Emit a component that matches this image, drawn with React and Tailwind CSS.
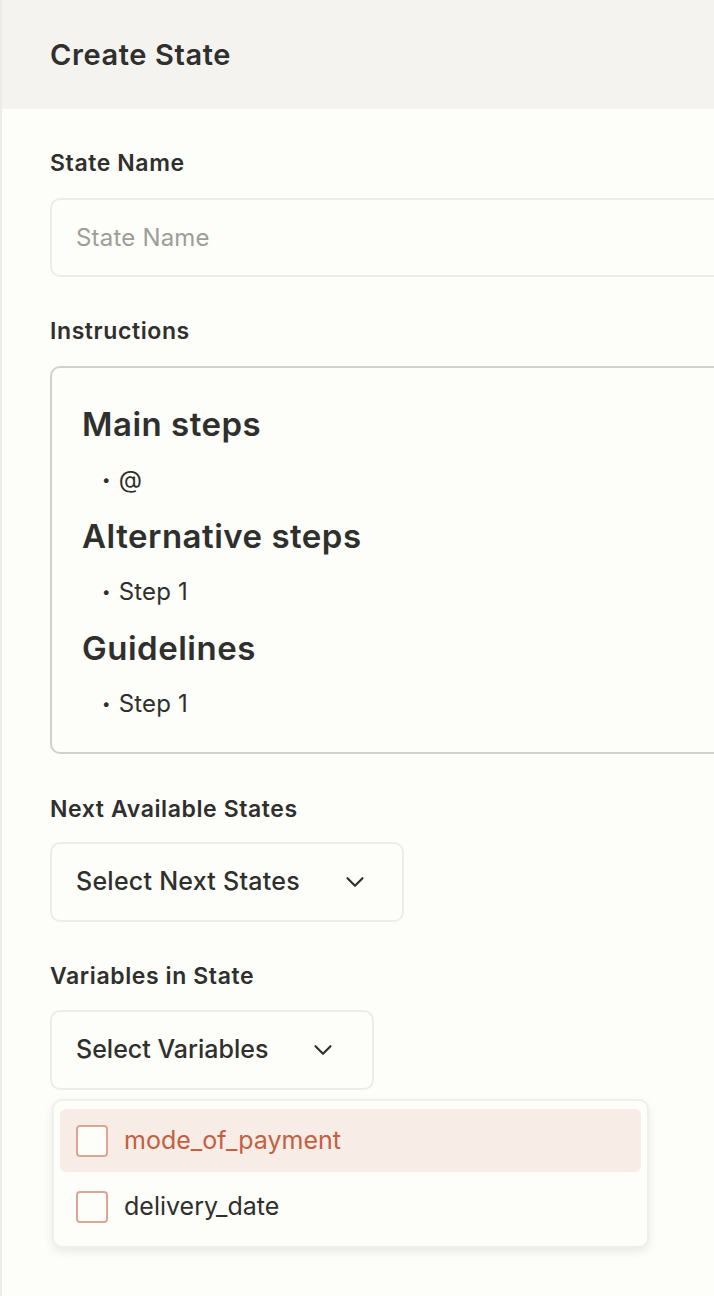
import React from "react";

const font = { fontFamily: "Inter, 'Noto Sans', sans-serif" };

function Chevron() {
  return (
    <svg width="30" height="30" viewBox="0 0 24 24" fill="none" stroke="#2f2f2d" strokeWidth="1.7" strokeLinecap="round" strokeLinejoin="round">
      <path d="M6 9l6 6 6-6" />
    </svg>
  );
}

function Label({ children }) {
  return <div className="text-[23px] font-semibold text-[#2f2f2d] leading-none tracking-[0.6px]">{children}</div>;
}

function Heading({ children, className = "" }) {
  return <div className={"text-[33px] font-semibold leading-[40px] tracking-[0.5px] " + className}>{children}</div>;
}

function Bullet({ children }) {
  return (
    <div className="mt-[20px] pl-[20px] text-[24px] leading-[32px] tracking-[0.2px] flex items-center gap-[8px]">
      <span className="text-[15px]">•</span>
      <span>{children}</span>
    </div>
  );
}

export default function App() {
  return (
    <div className="w-full h-[1296px] overflow-hidden bg-[#fdfdf9] border-l-2 border-[#ecece9]" style={font}>
      <div className="h-[109px] bg-[#f4f3ef] flex items-center pl-[48px]">
        <h1 className="text-[29px] font-semibold text-[#2f2f2d] tracking-[0.6px]">Create State</h1>
      </div>
      <div className="pl-[48px] w-[780px] flex flex-col">
        <div className="mt-[43px]"><Label>State Name</Label></div>
        <div className="mt-[23px] h-[79px] rounded-[10px] border-2 border-[#ecedea] flex items-center px-[24px] text-[24px] tracking-[0.2px] text-[#9d9d9a]">
          State Name
        </div>
        <div className="mt-[43px]"><Label>Instructions</Label></div>
        <div className="mt-[23px] h-[388px] rounded-[10px] border-2 border-[#d0d0ce] pl-[30px] pt-[36px] text-[#2f2f2d]">
          <Heading>Main steps</Heading>
          <Bullet>@</Bullet>
          <Heading className="mt-[20px]">Alternative steps</Heading>
          <Bullet>Step 1</Bullet>
          <Heading className="mt-[20px]">Guidelines</Heading>
          <Bullet>Step 1</Bullet>
        </div>
        <div className="mt-[44px]"><Label>Next Available States</Label></div>
        <div className="mt-[21px] w-[354px] h-[80px] rounded-[10px] border-2 border-[#ecedea] flex items-center pl-[24px] text-[25px] font-medium tracking-[0.25px] text-[#2f2f2d]">
          <span>Select Next States</span>
          <span className="ml-[40px] flex"><Chevron /></span>
        </div>
        <div className="mt-[43px]"><Label>Variables in State</Label></div>
        <div className="mt-[22px] w-[324px] h-[80px] rounded-[10px] border-2 border-[#ecedea] flex items-center pl-[24px] text-[25px] font-medium tracking-[0px] text-[#2f2f2d]">
          <span>Select Variables</span>
          <span className="ml-[40px] flex"><Chevron /></span>
        </div>
        <div className="mt-[9px] ml-[2px] w-[597px] rounded-[10px] border-2 border-[#efefed] bg-[#fdfdf9] shadow-[0_4px_10px_rgba(0,0,0,0.08)] px-[6px] pt-[8px] pb-[8px] flex flex-col gap-[4px]">
          <div className="h-[63px] rounded-[6px] bg-[#f8ece7] flex items-center pl-[16px] gap-[16px]">
            <span className="w-[32px] h-[32px] rounded-[4px] border-2 border-[#dca694] bg-[#fdfdf9]"></span>
            <span className="text-[25px] tracking-[0px] text-[#c3603f]">mode_of_payment</span>
          </div>
          <div className="h-[62px] flex items-center pl-[16px] gap-[16px]">
            <span className="w-[32px] h-[32px] rounded-[4px] border-2 border-[#dca694] bg-[#fdfdf9]"></span>
            <span className="text-[25px] tracking-[0px] text-[#2f2f2d]">delivery_date</span>
          </div>
        </div>
      </div>
    </div>
  );
}
